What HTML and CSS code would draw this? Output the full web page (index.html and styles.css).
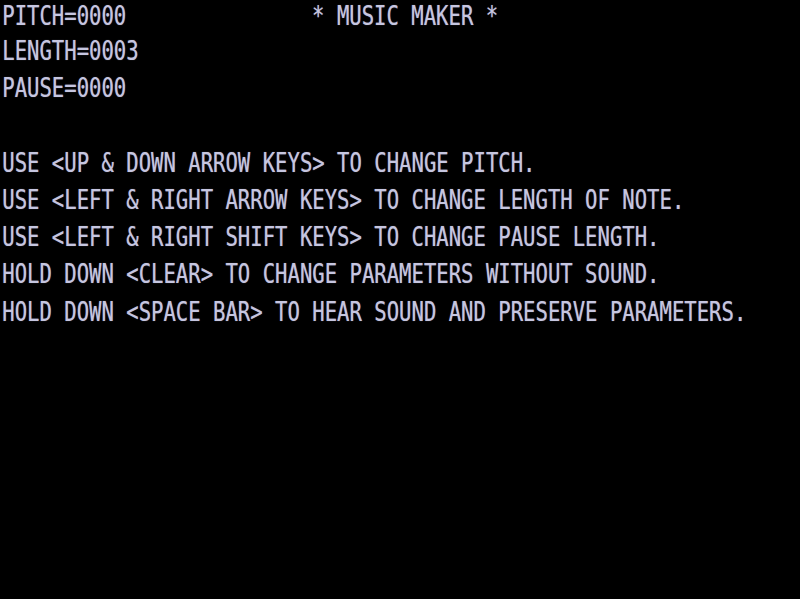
FILE: index.html
```html
<!DOCTYPE html>
<html>
<head>
<meta charset="utf-8">
<link rel="stylesheet" href="styles.css">
</head>
<body>
<div class="screen">
<div class="row first"><span class="cell">PITCH=0000</span><span class="title">* MUSIC MAKER *</span></div>
<div class="row">LENGTH=0003</div>
<div class="row">PAUSE=0000</div>
<div class="row"> </div>
<div class="row">USE &lt;UP &amp; DOWN ARROW KEYS&gt; TO CHANGE PITCH.</div>
<div class="row">USE &lt;LEFT &amp; RIGHT ARROW KEYS&gt; TO CHANGE LENGTH OF NOTE.</div>
<div class="row">USE &lt;LEFT &amp; RIGHT SHIFT KEYS&gt; TO CHANGE PAUSE LENGTH.</div>
<div class="row">HOLD DOWN &lt;CLEAR&gt; TO CHANGE PARAMETERS WITHOUT SOUND.</div>
<div class="row">HOLD DOWN &lt;SPACE BAR&gt; TO HEAR SOUND AND PRESERVE PARAMETERS.</div>
</div>
</body>
</html>
```
FILE: styles.css
```css
html, body {
  margin: 0;
  padding: 0;
  background: #000;
  width: 800px;
  height: 599px;
  overflow: hidden;
}
.screen {
  padding-left: 3px;
  font-family: "DejaVu Sans Mono", monospace;
  font-size: 27.4px;
  color: #c6c6e0;
  text-shadow: 0 0 1px rgba(200, 200, 230, 0.6);
  transform: scaleX(0.752);
  transform-origin: 0 0;
  width: 790px;
}
.row {
  display: flex;
  align-items: flex-start;
  height: 37.25px;
  line-height: 32px;
  white-space: pre;
}
.row.first {
  height: 34.85px;
}
.cell {
  flex: none;
  width: 412px;
}
.title {
  flex: none;
}
```
